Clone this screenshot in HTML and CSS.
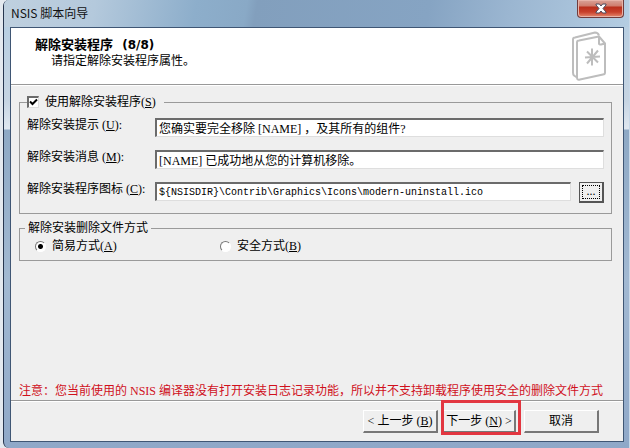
FILE: index.html
```
<!DOCTYPE html>
<html lang="zh-CN">
<head>
    <meta charset="UTF-8">
    <title>NSIS 脚本向导</title>
    <link rel="stylesheet" href="styles.css">
</head>
<body>
<div class="window">
    <div class="titlebar">
        <span class="title">NSIS 脚本向导</span>
        <button class="close" type="button" aria-label="关闭">
            <svg width="12" height="11" viewBox="0 0 12 11">
                <path d="M1 1h3.4L6 3 7.6 1H11v1L8 5.5 11 9v1H7.6L6 8 4.4 10H1V9l3-3.5L1 2z" fill="#fff" stroke="#4b4a5c"/>
            </svg>
        </button>
    </div>
    <form class="client">
        <div class="header">
            <div class="header-text">
                <h1>解除安装程序 <span class="step">(8/8)</span></h1>
                <p>请指定解除安装程序属性。</p>
            </div>
            <svg class="logo" width="34" height="50" viewBox="0 0 34 50" fill="none" stroke="#bdbdbd" stroke-width="2" stroke-linejoin="round">
                <path d="M5 46L2 44Q1 43 1 41V8Q1 6 3 6L23 1Q26 1 27 4"/>
                <path d="M27 5L7 9Q5 9 5 11V46Q5 49 8 48L31 43Q33 43 33 41V12L27 5V12Q27 13 29 13L33 12"/>
                <path d="M20 17V34M13 26L28 25M15 20L26 31M26 19L15 32"/>
            </svg>
        </div>

        <div class="content">
            <fieldset class="group">
                <legend class="check-legend">
                    <input class="check" type="checkbox" id="use" checked>
                    <label for="use">使用解除安装程序(<u>S</u>)</label>
                </legend>
                <div class="fields">
                    <label for="prompt">解除安装提示 (<u>U</u>):</label>
                    <input class="text" type="text" id="prompt" value="您确实要完全移除 [NAME] ，及其所有的组件?">
                    <label for="message">解除安装消息 (<u>M</u>):</label>
                    <input class="text" type="text" id="message" value="[NAME] 已成功地从您的计算机移除。">
                    <label for="icon">解除安装程序图标 (<u>C</u>):</label>
                    <div class="picker">
                        <input class="text path" type="text" id="icon" value="${NSISDIR}\Contrib\Graphics\Icons\modern-uninstall.ico">
                        <button class="browse" type="button"><span>...</span></button>
                    </div>
                </div>
            </fieldset>

            <fieldset class="group modes">
                <legend>解除安装删除文件方式</legend>
                <div class="radios">
                    <label><input class="radio" type="radio" name="mode" checked>简易方式(<u>A</u>)</label>
                    <label><input class="radio" type="radio" name="mode">安全方式(<u>B</u>)</label>
                </div>
            </fieldset>

            <p class="warning">注意：您当前使用的 NSIS 编译器没有打开安装日志记录功能，所以并不支持卸载程序使用安全的删除文件方式</p>
        </div>

        <div class="footer">
            <button class="btn" type="button">&lt; 上一步 (<u>B</u>)</button>
            <div class="next">
                <button class="btn" type="button">下一步 (<u>N</u>) &gt;</button>
                <span class="mark"></span>
            </div>
            <button class="btn cancel" type="button">取消</button>
        </div>
    </form>
</div>
</body>
</html>
```
FILE: styles.css
```
*{
    box-sizing: border-box;
    margin: 0;
    padding: 0;
}
body{
    background-color: #e4e9ef;
    font-family: "Liberation Serif", "Noto Sans CJK SC", serif;
    font-size: 12px;
    line-height: 16px;
    color: #000;
}
button,input{
    font: inherit;
    color: inherit;
}

/* 窗口 */
.window{
    display: flex;
    flex-direction: column;
    min-height: 100vh;
    margin-left: 3px;
    padding: 0 5px 6px 6px;
    border-left: 1px solid #27364f;
    border-right: 1px solid #c8d8e8;
    border-radius: 6px 0 0 6px;
    background: linear-gradient(#b3cde2 0, #c6d4e2 100px, #dfe7f0 129px, #8ea9c5 130px, #a2b9d2 280px, #8fa8c8 100%);
}
.titlebar{
    display: flex;
    justify-content: space-between;
    align-items: flex-start;
    height: 27px;
    margin: 0 -5px 0 -6px;
    padding: 0 5px 0 7px;
    border-radius: 5px 0 0 0;
    background: linear-gradient(100deg, #bfd0df 0, #b4c9dc 90px, #8daecb 190px, #89a9c6 240px, #829fbd 250px, #86a4c3 420px, #9bb6d1 500px, #b4cde2 100%);
}
.title{
    padding-top: 5px;
    font-family: "Noto Sans CJK SC", sans-serif;
    color: #111;
}
.close{
    display: flex;
    justify-content: center;
    align-items: center;
    width: 47px;
    height: 18px;
    border: 1px solid #713c3c;
    border-top: 0;
    border-radius: 0 0 4px 4px;
    background: linear-gradient(#d8a398 0, #cf7c6c 6px, #b92e1b 7px, #c8402b 12px, #e58a70 100%);
    box-shadow: inset 0 0 0 1px #e7b3a8;
}
.client{
    display: flex;
    flex-direction: column;
    flex: 1;
    border: 1px solid #3f5674;
    background-color: #efefef;
}

/* 标题区 */
.header{
    display: flex;
    justify-content: space-between;
    padding: 3px 17px 2px 24px;
    border-bottom: 1px solid #999;
    background-color: #fff;
}
.header-text{
    padding-top: 6px;
}
.header h1{
    font-size: 13px;
    line-height: 16px;
    font-weight: bold;
}
.header p{
    padding-left: 16px;
}
.step{
    margin-left: 6px;
    font-family: "DejaVu Sans", sans-serif;
    font-size: 12px;
}
.logo{
    flex: none;
    width: 34px;
    height: 51px;
}

/* 内容 */
.content{
    display: flex;
    flex-direction: column;
    flex: 1;
    padding: 8px 11px 1px 8px;
    border-top: 1px solid #fff;
}
.group{
    min-width: 0;
    padding: 0 7px 12px 7px;
    border: 1px solid #9a9a9a;
}
.check-legend{
    display: flex;
    align-items: center;
    gap: 6px;
    padding-right: 8px;
}
.fields{
    display: grid;
    grid-template-columns: 128px 1fr;
    grid-auto-rows: 19px;
    row-gap: 13px;
    padding-top: 8px;
}
.fields label{
    line-height: 14px;
    white-space: nowrap;
}
.text{
    width: 100%;
    min-width: 0;
    height: 19px;
    padding: 0 2px;
    border: 1px solid #dedede;
    border-top: 2px solid #6b6b6b;
    border-left: 2px solid #6b6b6b;
    border-radius: 0;
    background-color: #fff;
    line-height: 14px;
    outline: none;
}
.path{
    font-family: "Liberation Mono", monospace;
    font-size: 10px;
}
.picker{
    display: flex;
    align-items: flex-start;
    gap: 8px;
}
.browse{
    flex: none;
    width: 25px;
    height: 21px;
    padding: 2px;
    border: 1px solid #555;
    border-right: 2px solid #555;
    border-bottom: 2px solid #555;
    background-color: #efefef;
    line-height: 11px;
}
.browse span{
    display: block;
    height: 14px;
    border: 1px dotted #000;
}
.check{
    appearance: none;
    width: 12px;
    height: 12px;
    border: 1px solid #ddd;
    border-top: 2px solid #6b6b6b;
    border-left: 2px solid #6b6b6b;
    background-color: #fff;
}
.check:checked{
    background: #fff url("data:image/svg+xml,%3Csvg xmlns='http://www.w3.org/2000/svg' viewBox='0 0 9 9'%3E%3Cpath d='M1 3.5L3.5 6 8 1.5' fill='none' stroke='%23000' stroke-width='2'/%3E%3C/svg%3E") center / 9px 9px no-repeat;
}
.modes{
    margin-top: 6px;
    padding: 2px 7px 6px 5px;
}
.modes legend{
    padding: 0 3px;
}
.radios{
    display: grid;
    grid-template-columns: 185px 1fr;
    padding-left: 10px;
}
.radios label{
    display: flex;
    align-items: center;
}
.radio{
    appearance: none;
    width: 11px;
    height: 11px;
    margin-right: 6px;
    border: 1px solid #fff;
    border-top-color: #777;
    border-left-color: #777;
    border-radius: 50%;
    background-color: #fff;
}
.radio:checked{
    background-image: radial-gradient(circle, #000 2px, transparent 3px);
}
.warning{
    margin-top: auto;
    color: #d0101c;
    white-space: nowrap;
}

/* 底部按钮 */
.footer{
    display: flex;
    justify-content: flex-end;
    padding: 9px 24px 8px;
    border-top: 1px solid #999;
    box-shadow: inset 0 1px #fff;
}
.btn{
    width: 75px;
    height: 23px;
    border: 1px solid #fff;
    border-right: 2px solid #777;
    border-bottom: 2px solid #777;
    background-color: #efefef;
    white-space: nowrap;
}
.next{
    position: relative;
    margin-left: 5px;
}
.next .btn{
    width: 73px;
}
.mark{
    position: absolute;
    top: -10px;
    left: -2px;
    width: 80px;
    height: 35px;
    border: 3px solid #e23640;
    pointer-events: none;
}
.cancel{
    margin-left: 8px;
}
```
